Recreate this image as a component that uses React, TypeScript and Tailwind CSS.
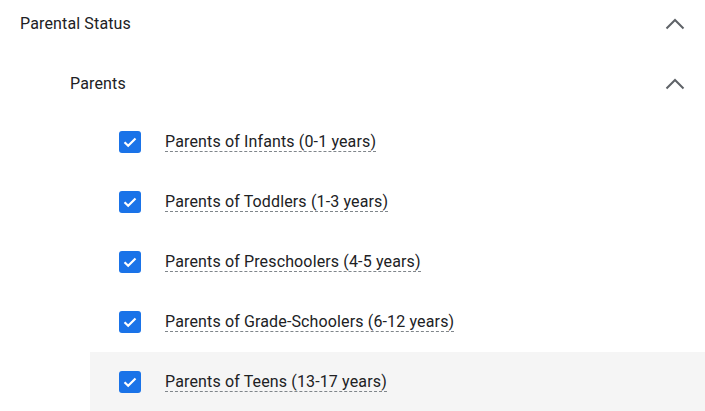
import { useState } from "react";

const options = [
  "Parents of Infants (0-1 years)",
  "Parents of Toddlers (1-3 years)",
  "Parents of Preschoolers (4-5 years)",
  "Parents of Grade-Schoolers (6-12 years)",
  "Parents of Teens (13-17 years)",
];

function ChevronUp() {
  return (
    <svg width="20" height="12" viewBox="0 0 20 12" fill="none">
      <path d="M1.5 10.5 L10 2 L18.5 10.5" stroke="#5f6368" strokeWidth="2" />
    </svg>
  );
}

function CheckBox() {
  return (
    <span className="flex h-[22px] w-[22px] items-center justify-center rounded-[3px] bg-[#1a73e8]">
      <svg width="16" height="16" viewBox="0 0 16 16" fill="none">
        <path d="M2.5 8.2 L6.2 11.8 L13.5 4.5" stroke="white" strokeWidth="2.2" />
      </svg>
    </span>
  );
}

export default function App() {
  const [hovered] = useState(4);

  return (
    <div
      className="w-[705px] h-[411px] overflow-hidden bg-white text-[#202124] text-[16px] tracking-[0.14px]"
      style={{ fontFamily: "Roboto, 'Liberation Sans', sans-serif" }}
    >
      <div className="flex h-[44px] items-center justify-between pt-1 pl-5 pr-5">
        <span>Parental Status</span>
        <ChevronUp />
      </div>
      <div className="mt-2 flex h-[60px] items-center justify-between pt-1 pl-[70px] pr-5">
        <span>Parents</span>
        <ChevronUp />
      </div>
      <div className="ml-[90px]">
        {options.map((label, i) => (
          <div
            key={label}
            className={
              i === hovered
                ? "flex h-[60px] items-center gap-6 bg-[#f5f5f5] pl-[29px]"
                : "flex h-[60px] items-center gap-6 pl-[29px]"
            }
          >
            <CheckBox />
            <span className="border-b border-dashed border-[#80868b] leading-[19px]">
              {label}
            </span>
          </div>
        ))}
      </div>
    </div>
  );
}
